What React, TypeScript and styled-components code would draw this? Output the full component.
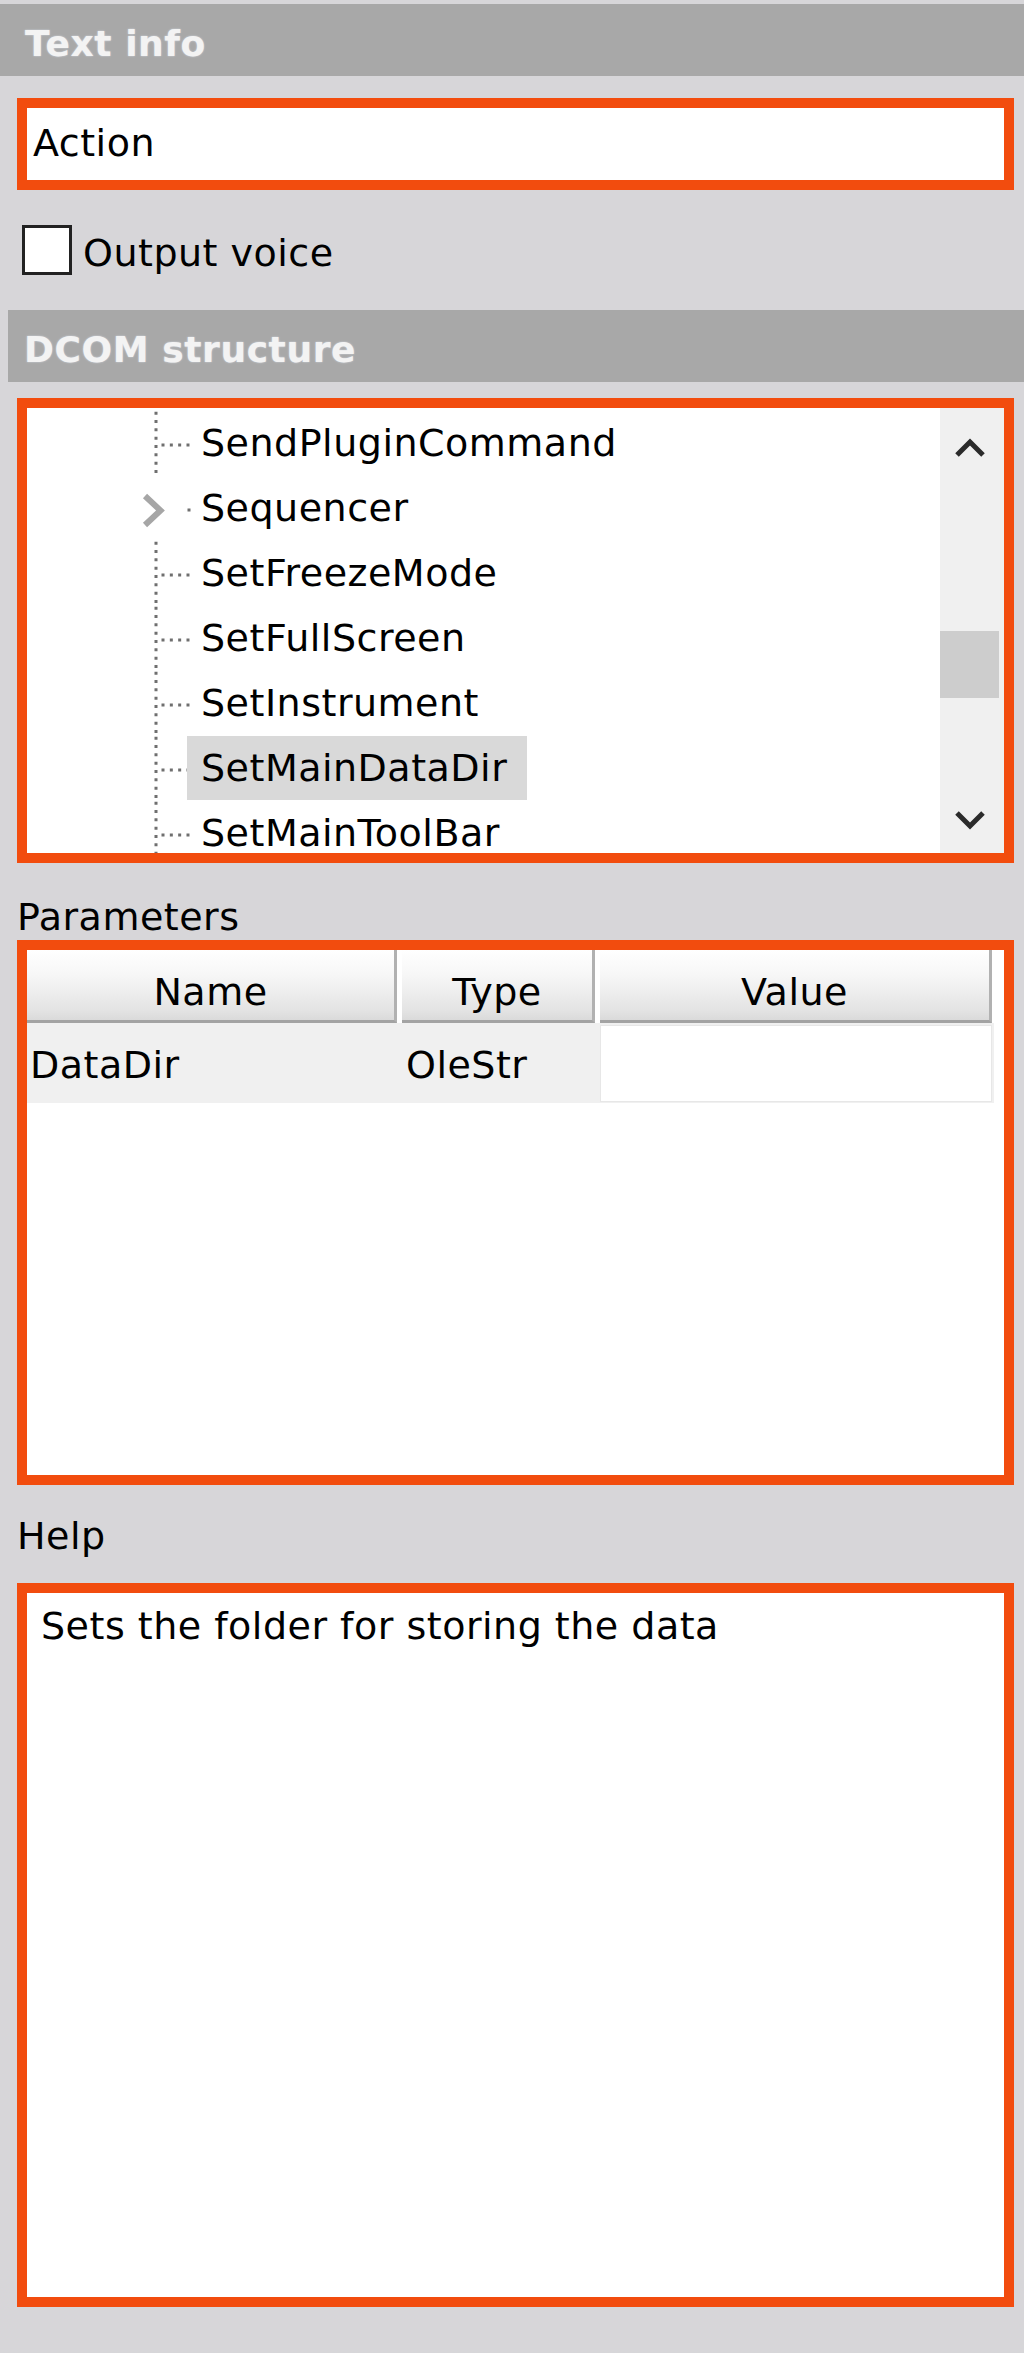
import React from 'react';
import styled, { createGlobalStyle } from 'styled-components';

const GlobalStyle = createGlobalStyle`
  html, body {
    margin: 0;
    padding: 0;
    background: #d7d6d9;
  }
  body {
    font-family: "DejaVu Sans", Verdana, sans-serif;
    font-size: 38px;
    letter-spacing: 0.5px;
    color: #000;
  }
  * { box-sizing: border-box; }
`;

const Page = styled.div`
  width: 1024px;
  min-height: 2353px;
  padding-top: 4px;
  display: flex;
  flex-direction: column;
  background: #d7d6d9;
`;

const SectionHeader = styled.div<{ $inset: number; $pad: number; $top?: number }>`
  height: 72px;
  margin-top: ${p => p.$top ?? 0}px;
  margin-left: ${p => p.$inset}px;
  padding: 7px 0 0 ${p => p.$pad}px;
  line-height: 65px;
  background: #a8a8a8;
  font-weight: bold;
  font-size: 36px;
  letter-spacing: 0.6px;
  color: #f3f3f3;
  text-shadow: 0 0 2px rgba(225, 232, 245, 0.8);
  white-space: nowrap;
`;

const OrangeBox = styled.div<{ $height: number; $top: number }>`
  flex: none;
  height: ${p => p.$height}px;
  margin: ${p => p.$top}px 10px 0 17px;
  border: 10px solid #f24c0e;
  background: #fff;
  overflow: hidden;
`;

const FieldText = styled.div`
  padding-left: 6px;
  line-height: 70px;
  white-space: nowrap;
`;

const CheckRow = styled.label`
  display: flex;
  align-items: flex-start;
  gap: 11px;
  height: 50px;
  margin: 35px 0 0 22px;
`;

const CheckBoxSquare = styled.span`
  flex: none;
  width: 50px;
  height: 50px;
  border: 3px solid #222;
  background: #fff;
`;

const CheckText = styled.span`
  padding-top: 3px;
  line-height: 50px;
  white-space: nowrap;
`;

const TreeInner = styled.div`
  display: flex;
  height: 100%;
`;

const TreeArea = styled.div`
  flex: 1;
  overflow: hidden;
  padding-top: 3px;
`;

const TreeRow = styled.div`
  display: flex;
  height: 65px;
`;

const Gutter = styled.svg`
  flex: none;
  display: block;
  width: 176px;
  height: 65px;
  margin-right: -16px;
`;

const NodeLabel = styled.div<{ $selected?: boolean }>`
  position: relative;
  height: 64px;
  line-height: 64px;
  padding: 0 20px 0 14px;
  white-space: nowrap;
  background: ${p => (p.$selected ? '#d9d9d9' : 'transparent')};
`;

const ScrollBar = styled.div`
  flex: none;
  width: 64px;
  display: flex;
  flex-direction: column;
  background: #f0f0f0;
`;

const ArrowButton = styled.div<{ $h: number }>`
  flex: none;
  width: 59px;
  height: ${p => p.$h}px;
  display: flex;
  align-items: center;
  justify-content: center;
`;

const ScrollTrackArea = styled.div`
  flex: 1;
`;

const Thumb = styled.div<{ $offset: number }>`
  width: 59px;
  height: 67px;
  margin-top: ${p => p.$offset}px;
  background: #cdcdcd;
`;

const SubLabel = styled.div<{ $top: number }>`
  margin: ${p => p.$top}px 0 0 17px;
  line-height: 44px;
  height: 44px;
  white-space: nowrap;
`;

const ParamGrid = styled.div`
  display: grid;
  grid-template-columns: 375px 198px 392px 1fr;
  grid-template-rows: 73px 80px;
`;

const HeaderCell = styled.div<{ $gap: number }>`
  margin-right: ${p => p.$gap}px;
  padding-top: 15px;
  line-height: 55px;
  text-align: center;
  background: linear-gradient(#ffffff 0%, #f7f7f7 35%, #e4e4e4 85%, #dadada 100%);
  border-bottom: 3px solid #a3a3a3;
  border-right: 3px solid #b1b1b1;
  white-space: nowrap;
`;

const EmptyCell = styled.div``;

const DataCell = styled.div<{ $pad: number }>`
  padding: 4px 0 0 ${p => p.$pad}px;
  line-height: 76px;
  background: #f0f0f0;
  white-space: nowrap;
`;

const ValueCell = styled.div`
  background: #f0f0f0;
  padding: 2px 0 3px 0;
  &::after {
    content: '';
    display: block;
    height: 100%;
    background: #fff;
    border: 1px solid #e7e7e7;
  }
`;

const TailCell = styled.div`
  background: linear-gradient(to right, #f0f0f0 2px, #fff 2px);
`;

const HelpText = styled.div`
  padding: 11px 0 0 14px;
  line-height: 44px;
  white-space: nowrap;
`;

type NodeKind = 'leaf' | 'collapsed';
interface TreeNode {
  label: string;
  kind: NodeKind;
  selected?: boolean;
}

const nodes: TreeNode[] = [
  { label: 'SendPluginCommand', kind: 'leaf' },
  { label: 'Sequencer', kind: 'collapsed' },
  { label: 'SetFreezeMode', kind: 'leaf' },
  { label: 'SetFullScreen', kind: 'leaf' },
  { label: 'SetInstrument', kind: 'leaf' },
  { label: 'SetMainDataDir', kind: 'leaf', selected: true },
  { label: 'SetMainToolBar', kind: 'leaf' },
];

const DOT = '#6f6f6f';

function Connector({ kind }: { kind: NodeKind }) {
  return (
    <Gutter viewBox="0 0 176 65">
      {kind === 'leaf' ? (
        <>
          <line x1={129} y1={0.7} x2={129} y2={65} stroke={DOT} strokeWidth={3} strokeDasharray="3 5.33" />
          <line x1={134.5} y1={34} x2={163} y2={34} stroke={DOT} strokeWidth={3} strokeDasharray="3 5.33" />
        </>
      ) : (
        <>
          <polyline points="118,20 133.5,34.5 118,49" fill="none" stroke="#a6a6a6" strokeWidth={6} />
          <rect x={160.5} y={32.5} width={3} height={3} fill={DOT} />
        </>
      )}
    </Gutter>
  );
}

function Chevron({ dir }: { dir: 'up' | 'down' }) {
  const pts = dir === 'up' ? '2,20 15,7 28,20' : '2,4 15,17 28,4';
  return (
    <svg width="30" height="24" viewBox="0 0 30 24">
      <polyline points={pts} fill="none" stroke="#2b2b2b" strokeWidth={5} strokeLinejoin="miter" />
    </svg>
  );
}

export default function App() {
  return (
    <>
      <GlobalStyle />
      <Page>
        <SectionHeader $inset={0} $pad={25}>Text info</SectionHeader>

        <OrangeBox $height={92} $top={22}>
          <FieldText>Action</FieldText>
        </OrangeBox>

        <CheckRow>
          <CheckBoxSquare />
          <CheckText>Output voice</CheckText>
        </CheckRow>

        <SectionHeader $inset={8} $pad={16} $top={35}>DCOM structure</SectionHeader>

        <OrangeBox $height={465} $top={16}>
          <TreeInner>
            <TreeArea>
              {nodes.map(n => (
                <TreeRow key={n.label}>
                  <Connector kind={n.kind} />
                  <NodeLabel $selected={n.selected}>{n.label}</NodeLabel>
                </TreeRow>
              ))}
            </TreeArea>
            <ScrollBar>
              <ArrowButton $h={78}>
                <Chevron dir="up" />
              </ArrowButton>
              <ScrollTrackArea>
                <Thumb $offset={145} />
              </ScrollTrackArea>
              <ArrowButton $h={65}>
                <Chevron dir="down" />
              </ArrowButton>
            </ScrollBar>
          </TreeInner>
        </OrangeBox>

        <SubLabel $top={32}>Parameters</SubLabel>
        <OrangeBox $height={545} $top={1}>
          <ParamGrid>
            <HeaderCell $gap={5}>Name</HeaderCell>
            <HeaderCell $gap={5}>Type</HeaderCell>
            <HeaderCell $gap={0}>Value</HeaderCell>
            <EmptyCell />
            <DataCell $pad={3}>DataDir</DataCell>
            <DataCell $pad={4}>OleStr</DataCell>
            <ValueCell />
            <TailCell />
          </ParamGrid>
        </OrangeBox>

        <SubLabel $top={29}>Help</SubLabel>
        <OrangeBox $height={724} $top={25}>
          <HelpText>Sets the folder for storing the data</HelpText>
        </OrangeBox>
      </Page>
    </>
  );
}
